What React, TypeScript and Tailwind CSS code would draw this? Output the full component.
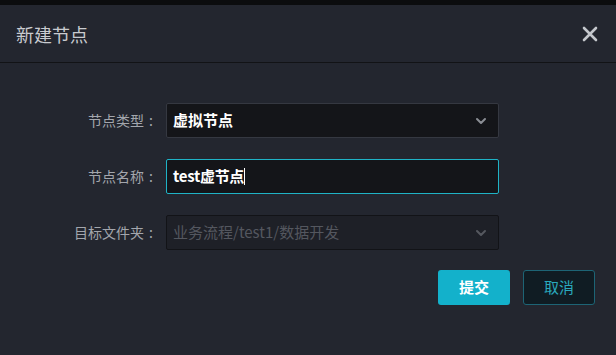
import React from "react";

const font = { fontFamily: '"Microsoft YaHei", "Noto Sans CJK SC", "Liberation Sans", sans-serif' };

function Chevron({ color }: { color: string }) {
  return (
    <svg width="12" height="8" viewBox="0 0 12 8" fill="none">
      <path d="M2 2 L6 6 L10 2" stroke={color} strokeWidth="2" strokeLinecap="round" strokeLinejoin="round" />
    </svg>
  );
}

function Label({ text }: { text: string }) {
  return (
    <div className="w-[157px] pr-[2px] flex justify-end items-center text-[14px] text-[#a3a6ad]">
      <span>{text}</span>
      <span className="ml-[5px] mr-[2px]">:</span>
    </div>
  );
}

export default function App() {
  return (
    <div className="w-[616px] h-[355px] bg-[#0b0c0e] flex flex-col overflow-hidden" style={font}>
      <div className="h-[5px] shrink-0" />
      <div className="flex-1 bg-[#23262f] flex flex-col">
        <div className="h-[58px] flex items-center justify-between pl-[16px] pr-[18px] border-b border-[#121316]">
          <span className="text-[18px] text-[#c9cbd0] leading-none">新建节点</span>
          <svg width="16" height="16" viewBox="0 0 16 16">
            <path d="M2 2 L14 14 M14 2 L2 14" stroke="#c4c7cc" strokeWidth="2.6" strokeLinecap="round" />
          </svg>
        </div>
        <div className="flex flex-col pt-[40px] gap-[21px]">
          <div className="flex items-center">
            <Label text="节点类型" />
            <div className="ml-[9px] w-[333px] h-[35px] bg-[#141519] border border-[#353841] rounded-[2px] flex items-center justify-between pl-[6px] pr-[11px]">
              <span className="text-[15px] font-bold text-white">虚拟节点</span>
              <Chevron color="#8a8d94" />
            </div>
          </div>
          <div className="flex items-center">
            <Label text="节点名称" />
            <div className="ml-[9px] w-[333px] h-[35px] bg-[#141519] border border-[#1fb3c6] rounded-[2px] flex items-center pl-[6px]">
              <span className="text-[15px] font-bold text-white tracking-[-0.3px]">test虚节点</span>
              <span className="w-[1px] h-[17px] bg-white" />
            </div>
          </div>
          <div className="flex items-center">
            <Label text="目标文件夹" />
            <div className="ml-[9px] w-[333px] h-[35px] bg-[#1e2027] border border-[#121317] rounded-[2px] flex items-center justify-between pl-[6px] pr-[11px]">
              <span className="text-[15px] text-[#54575f]">业务流程/test1/数据开发</span>
              <Chevron color="#55585f" />
            </div>
          </div>
        </div>
        <div className="flex justify-end pr-[21px] pt-[20px] gap-[13px]">
          <button className="w-[72px] h-[35px] rounded-[3px] bg-[#13b1cb] text-white text-[15px] font-bold">提交</button>
          <button className="w-[72px] h-[35px] rounded-[3px] bg-[#101c23] border border-[#1d6475] text-[#2aa9bd] text-[15px]">取消</button>
        </div>
      </div>
    </div>
  );
}
